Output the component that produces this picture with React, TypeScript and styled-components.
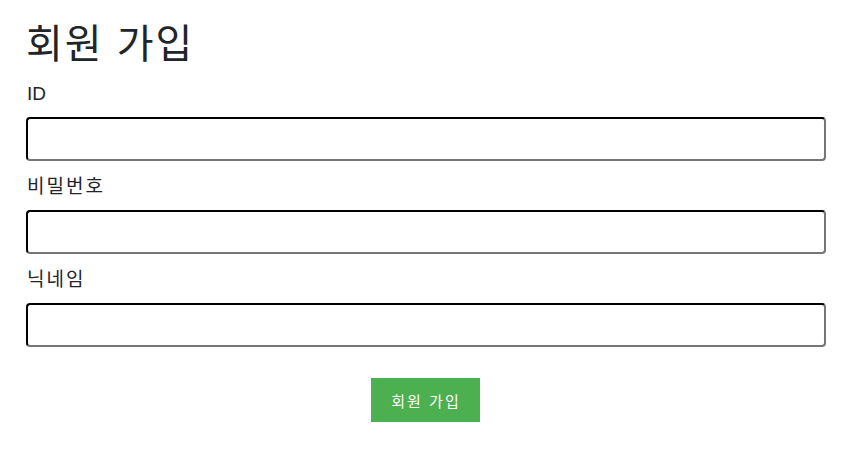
import React from "react";
import styled, { createGlobalStyle } from "styled-components";

const Global = createGlobalStyle`
  html, body { margin: 0; padding: 0; background: #fff; }
  body { font-family: "Liberation Sans", "Noto Sans CJK KR", Arial, sans-serif; color: #212529; }
  * { box-sizing: border-box; }
`;

const Page = styled.div`
  padding: 20px 26px 0 26px;
`;

const Title = styled.h1`
  margin: 0;
  font-size: 40px;
  line-height: 48px;
  font-weight: 400;
  letter-spacing: 2px;
  color: #212529;
`;

const Form = styled.form`
  width: 800px;
  display: flex;
  flex-direction: column;
`;

const Label = styled.label<{ $hangul?: boolean }>`
  margin: 13px 0 11px 1px;
  font-size: 19px;
  line-height: 25px;
  letter-spacing: ${(p) => (p.$hangul ? "2px" : "0")};
  color: #212529;
`;

const Input = styled.input`
  width: 800px;
  height: 44px;
  border: 2px inset #767676;
  border-top-color: #1f1f1f;
  border-left-color: #1f1f1f;
  border-radius: 4px;
  font-size: 16px;
  padding: 0 10px;
  background: #fff;
  outline: none;
`;

const Actions = styled.div`
  display: flex;
  justify-content: center;
  margin-top: 31px;
  padding-right: 2px;
`;

const Button = styled.button`
  width: 109px;
  height: 44px;
  padding: 0 0 0 2px;
  background: #4caf50;
  color: #fff;
  border: none;
  font-family: "Liberation Sans", "Noto Sans CJK KR", sans-serif;
  font-size: 15px;
  letter-spacing: 2px;
  cursor: pointer;
`;

export default function App() {
  return (
    <Page>
      <Global />
      <Title>회원 가입</Title>
      <Form onSubmit={(e) => e.preventDefault()}>
        <Label htmlFor="id">ID</Label>
        <Input id="id" type="text" />
        <Label htmlFor="pw" $hangul>
          비밀번호
        </Label>
        <Input id="pw" type="password" />
        <Label htmlFor="nick" $hangul>
          닉네임
        </Label>
        <Input id="nick" type="text" />
        <Actions>
          <Button type="submit">회원 가입</Button>
        </Actions>
      </Form>
    </Page>
  );
}
